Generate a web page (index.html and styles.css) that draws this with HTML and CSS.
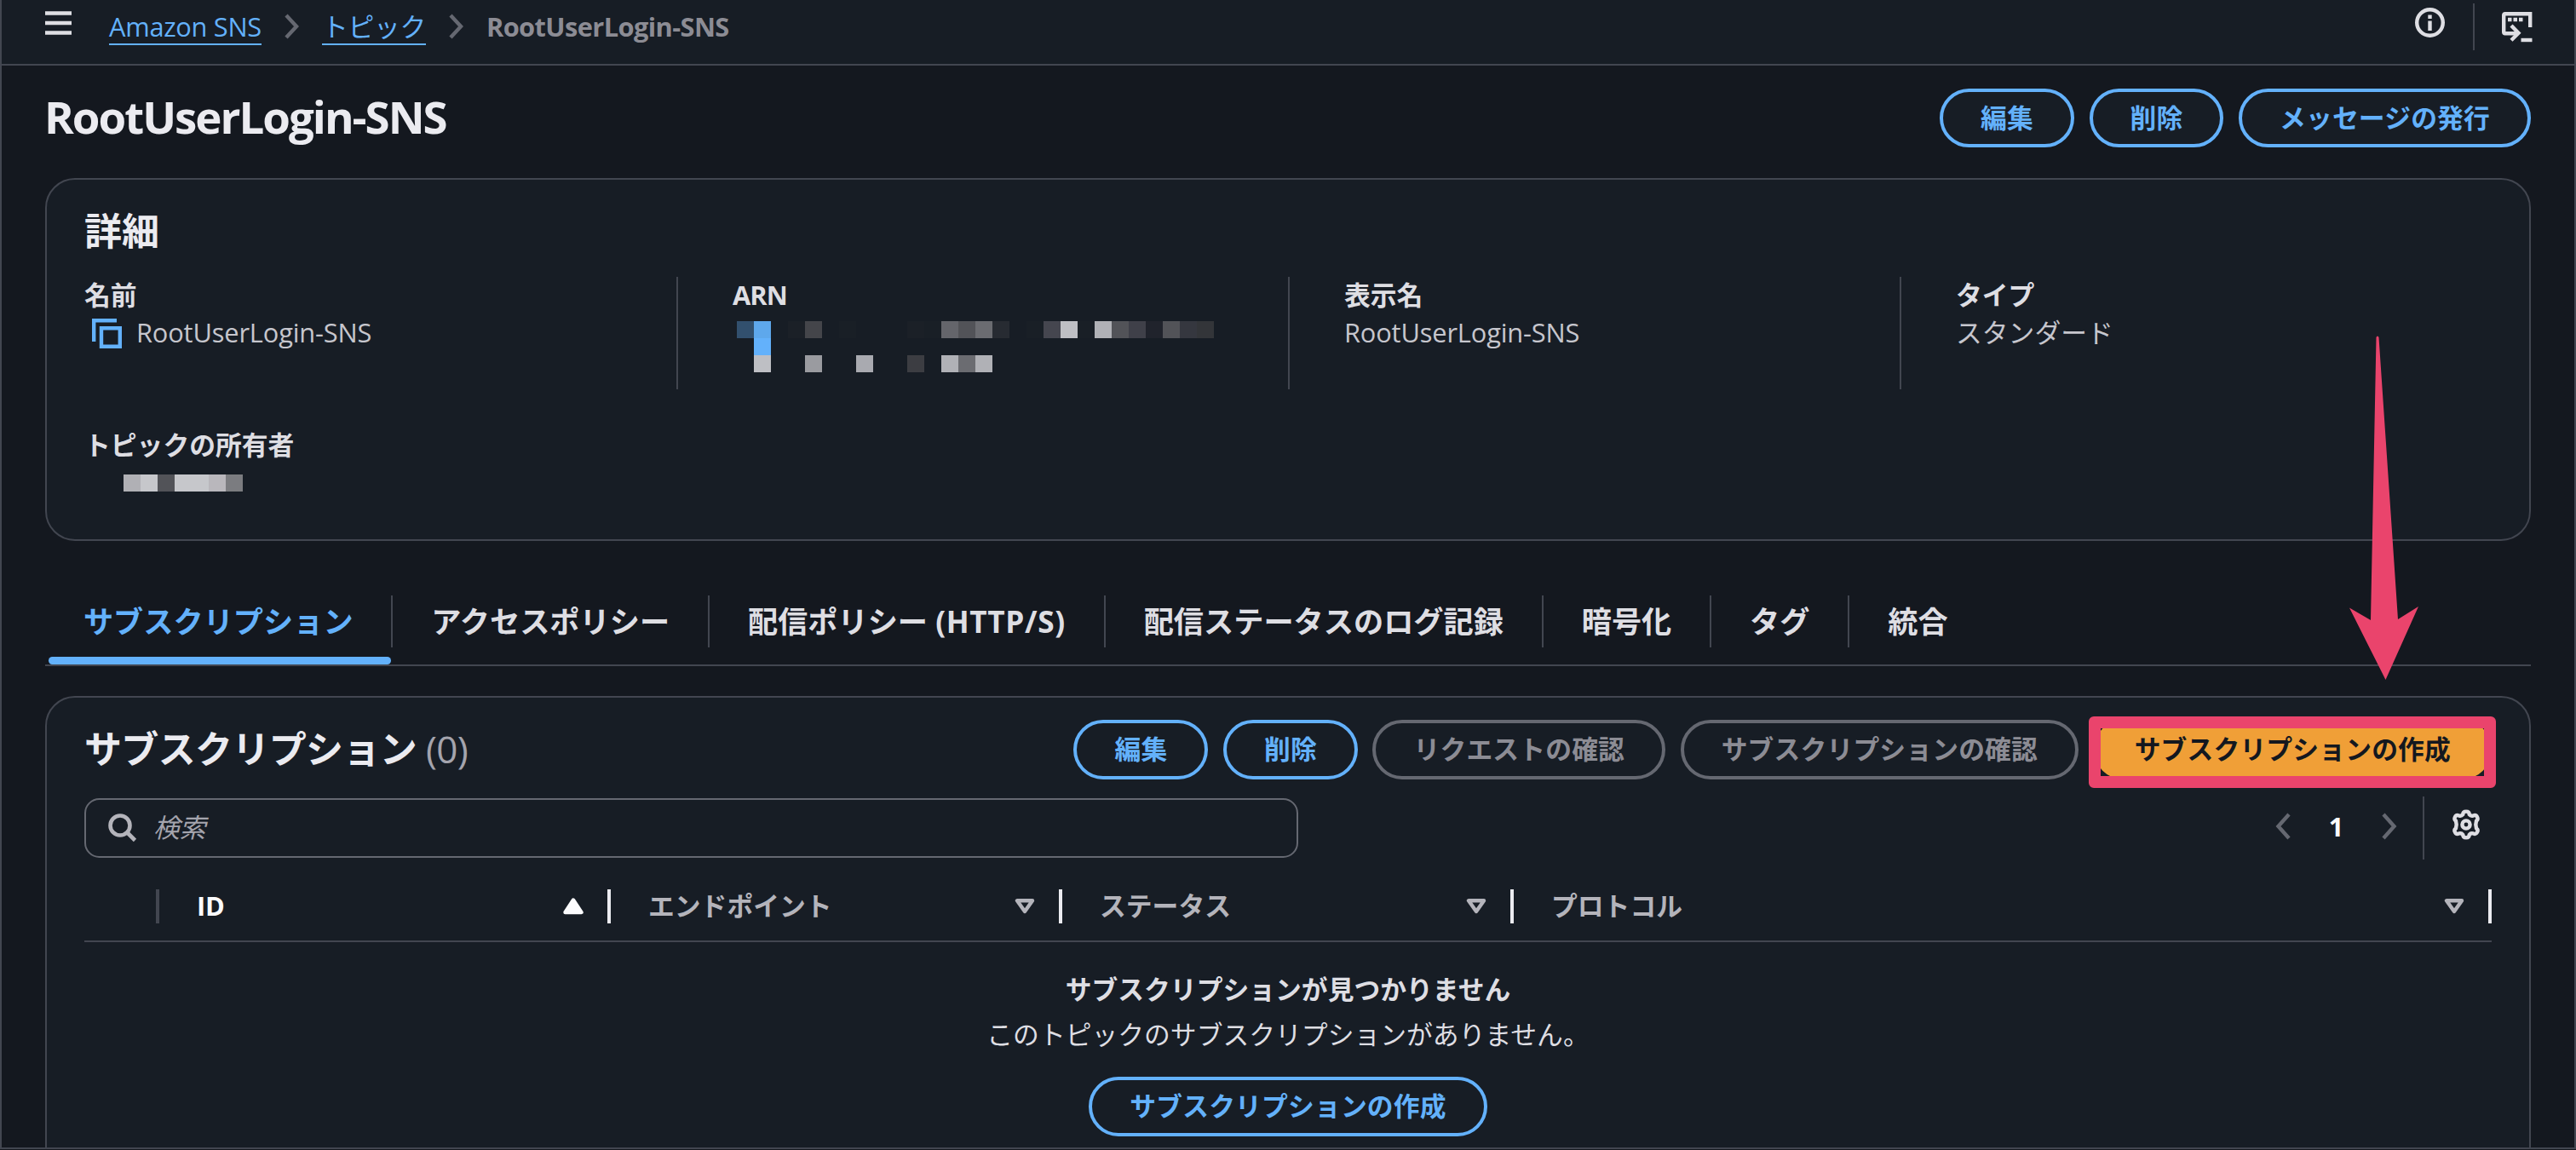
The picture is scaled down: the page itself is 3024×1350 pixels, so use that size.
FILE: index.html
```html
<!DOCTYPE html>
<html lang="ja">
<head>
    <meta charset="UTF-8">
    <meta name="viewport" content="width=device-width, initial-scale=1.0">
    <title>RootUserLogin-SNS | Amazon SNS</title>
    <link rel="stylesheet" href="styles.css">
</head>
<body>
    <div class="console">
        <header class="topbar">
            <svg class="menu-icon" width="31" height="28" viewBox="0 0 31 28">
                <path d="M0 2.5h31M0 14h31M0 25.5h31"/>
            </svg>
            <nav class="breadcrumb">
                <a class="crumb" href="#">Amazon SNS</a>
                <svg class="crumb-sep" width="18" height="30" viewBox="0 0 18 30"><path d="M2 2l12 13L2 28"/></svg>
                <a class="crumb" href="#">トピック</a>
                <svg class="crumb-sep" width="18" height="30" viewBox="0 0 18 30"><path d="M2 2l12 13L2 28"/></svg>
                <span class="crumb-current">RootUserLogin-SNS</span>
            </nav>
            <div class="topbar-tools">
                <svg class="info-icon" width="35" height="35" viewBox="0 0 35 35">
                    <circle cx="17.5" cy="17.5" r="15.3"/>
                    <path d="M17.5 8.5v4.5M17.5 15.5v11.5"/>
                </svg>
                <span class="tools-divider"></span>
                <svg class="shell-icon" width="36" height="36" viewBox="0 0 36 36">
                    <path d="M18 25.2H3.700q-1.500 0-1.500-1.500V3.700q0-1.500 1.500-1.500h29.500V18"/>
                    <path d="M11 16l8.5 8.8L11 33.2"/>
                    <path d="M22.500 33H35.500"/>
                    <path d="M7 9h4.500M13.500 9H18M20 9h4.500"/>
                </svg>
            </div>
        </header>

        <main class="content">
            <div class="title-row">
                <h1>RootUserLogin-SNS</h1>
                <div class="actions">
                    <button class="btn">編集</button>
                    <button class="btn">削除</button>
                    <button class="btn">メッセージの発行</button>
                </div>
            </div>

            <section class="card details">
                <h2>詳細</h2>
                <div class="detail-grid">
                    <div class="detail">
                        <div class="label">名前</div>
                        <div class="value copy-value">
                            <svg class="copy-icon" width="35" height="35" viewBox="0 0 35 35">
                                <path d="M2.200 27V2.200H29"/>
                                <path d="M11 11.200h21.800v21.600H11z"/>
                            </svg>
                            <span class="latin">RootUserLogin-SNS</span>
                        </div>
                    </div>
                    <div class="detail">
                        <div class="label latin">ARN</div>
                        <!-- masked value -->
                        <svg class="mask-arn" width="560" height="60" viewBox="0 0 28 3" shape-rendering="crispEdges">
                            <path fill="#32506e" d="M0 0h1v1H0z"/>
                            <path fill="#5ea8ec" d="M1 0h1v1H1z"/>
                            <path fill="#63b1fb" d="M1 1h1v1H1z"/>
                            <path fill="#1b2027" d="M3 0h1v1H3zM10 0h1v1h-1z"/>
                            <path fill="#44454a" d="M4 0h1v1H4z"/>
                            <path fill="#191f26" d="M6 0h1v1H6zM11 0h1v1h-1zM17 0h1v1h-1zM20 0h1v1h-1z"/>
                            <path fill="#64656b" d="M12 0h1v1h-1z"/>
                            <path fill="#525358" d="M13 0h1v1h-1zM22 0h1v1h-1zM25 0h1v1h-1z"/>
                            <path fill="#6b6c71" d="M14 0h1v1h-1zM13 2h1v1h-1z"/>
                            <path fill="#272b32" d="M15 0h1v1h-1z"/>
                            <path fill="#45464f" d="M18 0h1v1h-1z"/>
                            <path fill="#bebfc4" d="M19 0h1v1h-1zM1 2h1v1H1z"/>
                            <path fill="#b0b1b6" d="M21 0h1v1h-1zM12 2h1v1h-1zM14 2h1v1h-1z"/>
                            <path fill="#3f4049" d="M23 0h1v1h-1z"/>
                            <path fill="#20232c" d="M24 0h1v1h-1z"/>
                            <path fill="#35373f" d="M26 0h1v1h-1z"/>
                            <path fill="#333539" d="M27 0h1v1h-1z"/>
                            <path fill="#9a9ba0" d="M4 2h1v1H4z"/>
                            <path fill="#a9aab0" d="M7 2h1v1H7z"/>
                            <path fill="#3c3d42" d="M10 2h1v1h-1z"/>
                        </svg>
                    </div>
                    <div class="detail">
                        <div class="label">表示名</div>
                        <div class="value"><span class="latin">RootUserLogin-SNS</span></div>
                    </div>
                    <div class="detail">
                        <div class="label">タイプ</div>
                        <div class="value">スタンダード</div>
                    </div>
                    <div class="detail">
                        <div class="label">トピックの所有者</div>
                        <svg class="mask-owner" width="140" height="20" viewBox="0 0 7 1" shape-rendering="crispEdges">
                            <path fill="#c6c7cb" d="M1 0h4v1H1z"/>
                            <path fill="#b0b0b5" d="M0 0h1v1H0z"/>
                            <path fill="#525358" d="M2 0h1v1H2z"/>
                            <path fill="#b9b7bc" d="M5 0h1v1H5z"/>
                            <path fill="#7b7c80" d="M6 0h1v1H6z"/>
                        </svg>
                    </div>
                </div>
            </section>

            <nav class="tabs">
                <a class="tab active" href="#">サブスクリプション</a>
                <a class="tab" href="#">アクセスポリシー</a>
                <a class="tab" href="#">配信ポリシー <span class="protocol">(HTTP/S)</span></a>
                <a class="tab" href="#">配信ステータスのログ記録</a>
                <a class="tab" href="#">暗号化</a>
                <a class="tab" href="#">タグ</a>
                <a class="tab" href="#">統合</a>
            </nav>

            <section class="card subscriptions">
                <div class="subs-header">
                    <h2>サブスクリプション <span class="count">(0)</span></h2>
                    <div class="actions">
                        <button class="btn">編集</button>
                        <button class="btn">削除</button>
                        <button class="btn" disabled>リクエストの確認</button>
                        <button class="btn" disabled>サブスクリプションの確認</button>
                        <div class="highlighted">
                            <button class="btn btn-primary">サブスクリプションの作成</button>
                            <span class="highlight-box"></span>
                            <svg class="arrow" width="82" height="405" viewBox="0 0 82 405">
                                <path d="M31.500 2q1.500-3 3 0L57 333l24-15-38.500 86L0 319.500 25 334z"/>
                            </svg>
                        </div>
                    </div>
                </div>

                <div class="toolbar">
                    <div class="search">
                        <svg class="search-icon" width="34" height="34" viewBox="0 0 34 34">
                            <circle cx="14" cy="14" r="11.500"/>
                            <path d="M22 22l9.500 9.500"/>
                        </svg>
                        <span class="placeholder">検索</span>
                    </div>
                    <div class="pagination">
                        <svg class="page-arrow" width="18" height="32" viewBox="0 0 18 32"><path d="M16 2L3.500 16 16 30"/></svg>
                        <span class="page">1</span>
                        <svg class="page-arrow" width="18" height="32" viewBox="0 0 18 32"><path d="M2 2l12.500 14L2 30"/></svg>
                        <span class="page-divider"></span>
                        <svg class="gear-icon" width="36" height="36" viewBox="0 0 36 36">
                            <path d="M14.200 6.200Q14.200 2.600 18 2.600T21.800 6.200Q23.500 8.400 26.200 7.600 29.400 6 31 9T30 13.700Q28.600 18 30 22.300 32.600 24 31 27T26.200 28.400Q23.500 27.600 21.800 29.800 21.800 33.400 18 33.400T14.200 29.800Q12.500 27.600 9.800 28.400 6.600 30 5 27T6 22.300Q7.400 18 6 13.700 3.400 12 5 9T9.800 7.600Q12.500 8.400 14.200 6.200z"/>
                            <circle cx="18" cy="18" r="4.600"/>
                        </svg>
                    </div>
                </div>

                <div class="table-head">
                    <div class="th th-select"></div>
                    <div class="th sorted">
                        <span class="latin">ID</span>
                        <svg width="24" height="20" viewBox="0 0 24 20"><path class="filled" d="M12 2.500L21.500 17h-19z"/></svg>
                    </div>
                    <div class="th">
                        <span>エンドポイント</span>
                        <svg width="24" height="20" viewBox="0 0 24 20"><path d="M3 3.200h18L12 16z"/></svg>
                    </div>
                    <div class="th">
                        <span>ステータス</span>
                        <svg width="24" height="20" viewBox="0 0 24 20"><path d="M3 3.200h18L12 16z"/></svg>
                    </div>
                    <div class="th">
                        <span>プロトコル</span>
                        <svg width="24" height="20" viewBox="0 0 24 20"><path d="M3 3.200h18L12 16z"/></svg>
                    </div>
                </div>

                <div class="empty">
                    <div class="empty-title">サブスクリプションが見つかりません</div>
                    <div class="empty-text">このトピックのサブスクリプションがありません。</div>
                    <button class="btn">サブスクリプションの作成</button>
                </div>
            </section>
        </main>
    </div>
</body>
</html>
```
FILE: styles.css
```css
* {
    box-sizing: border-box;
}
body {
    margin: 0;
    background: #14181f;
    font-family: "Open Sans", "Noto Sans CJK JP", sans-serif;
    font-size: 30.8px;
    line-height: 44px;
    color: #dedee3;
}
h1, h2 {
    margin: 0;
    color: #ebebf0;
    font-weight: 700;
}
svg {
    display: block;
    flex: none;
    fill: none;
}
.console {
    display: flex;
    flex-direction: column;
    height: 1349px;
    overflow: hidden;
    border: 2px solid #424650;
    border-top: none;
}

/* top bar */
.topbar {
    display: flex;
    align-items: flex-start;
    flex: none;
    height: 77px;
    padding: 0 49px 0 51px;
    background: #171d25;
    border-bottom: 2px solid #424650;
}
.menu-icon {
    margin-top: 13px;
    stroke: #dedee3;
    stroke-width: 4.4;
}
.breadcrumb {
    display: flex;
    margin: 9px 0 0 44px;
}
.crumb {
    height: 44px;
    color: #63b1fb;
    text-decoration: none;
    border-bottom: 2px solid #63b1fb;
    letter-spacing: -0.3px;
}
.crumb-sep {
    margin: 7px 26px 0 27px;
    stroke: #656871;
    stroke-width: 4.4;
}
.crumb-current {
    color: #8c8c94;
    font-weight: 700;
    letter-spacing: -0.6px;
}
.topbar-tools {
    display: flex;
    margin-left: auto;
}
.info-icon {
    margin-top: 9px;
    stroke: #dedee3;
    stroke-width: 4.4;
}
.tools-divider {
    width: 2px;
    height: 55px;
    margin: 4px 32px 0 33px;
    background: #424650;
}
.shell-icon {
    margin-top: 14px;
    stroke: #dedee3;
    stroke-width: 4.4;
}

/* page */
.content {
    flex: 1;
    padding: 27px 51px 0;
}
.title-row {
    display: flex;
    justify-content: space-between;
    height: 69px;
}
h1 {
    font-size: 52.8px;
    line-height: 66px;
    margin-left: -1px;
    letter-spacing: -2px;
}
h2 {
    font-size: 44px;
    line-height: 52px;
}
.actions {
    display: flex;
    gap: 17.6px;
}
.btn {
    height: 70px;
    padding: 0 44px 2px;
    border: 4.4px solid #63b1fb;
    border-radius: 44px;
    background: #171d25;
    color: #63b1fb;
    font: inherit;
    font-weight: 700;
    line-height: 44px;
    letter-spacing: 0.15px;
    white-space: nowrap;
}
.title-row .btn {
    height: 69px;
}
.btn:disabled {
    border-color: #656871;
    color: #8c8c94;
}
.btn-primary {
    border-color: #f09f37;
    background: #f09f37;
    color: #14181f;
}
.card {
    background: #171d25;
    border: 2px solid #424650;
    border-radius: 35px;
    padding: 0 44px;
}

/* details */
.details {
    height: 426px;
    margin-top: 36px;
    padding-top: 34px;
}
.detail-grid {
    display: grid;
    grid-template-columns: 695px 718px 718px 1fr;
    row-gap: 44px;
    margin-top: 28px;
}
.detail {
    height: 132px;
    padding-left: 64px;
    border-left: 2px solid #424650;
}
.detail:nth-child(4n + 1) {
    padding-left: 0;
    border-left: none;
}
.detail:nth-child(n + 5) {
    height: 80px;
}
.label {
    line-height: 43px;
    font-weight: 700;
}
.value {
    color: #c6c6cd;
}
.latin {
    letter-spacing: -0.15px;
}
.label.latin {
    letter-spacing: -0.9px;
}
.copy-value {
    display: flex;
}
.copy-icon {
    margin: 6px 17px 0 9px;
    stroke: #63b1fb;
    stroke-width: 4.4;
}
.mask-arn {
    margin: 9px 0 0 5px;
}
.mask-owner {
    margin: 13px 0 0 46px;
}

/* tabs */
.tabs {
    display: flex;
    height: 103px;
    margin-top: 44px;
    padding-top: 20px;
    border-bottom: 2px solid #424650;
}
.tab {
    position: relative;
    height: 61px;
    padding: 0 44.9px;
    border-right: 2px solid #424650;
    color: #dedee3;
    font-size: 35.2px;
    font-weight: 700;
    line-height: 60px;
    text-decoration: none;
    white-space: nowrap;
}
.tab:last-child {
    border-right: none;
}
.tab.active {
    color: #63b1fb;
}
.tab.active::after {
    content: "";
    position: absolute;
    left: 4px;
    right: 0;
    bottom: -20px;
    height: 9px;
    border-radius: 4.4px;
    background: #63b1fb;
}
.protocol {
    letter-spacing: 0.65px;
}

/* subscriptions */
.subscriptions {
    height: 600px;
    margin-top: 35px;
    padding-top: 26px;
}
.subs-header {
    display: flex;
    justify-content: space-between;
    height: 70px;
}
.subs-header h2 {
    line-height: 68px;
    letter-spacing: -0.65px;
}
.count {
    color: #a4a4ad;
    font-weight: 400;
}
.highlighted {
    position: relative;
}
.highlight-box {
    position: absolute;
    top: -4px;
    left: -6px;
    right: -5px;
    height: 84px;
    border: 14px solid #ea446c;
    border-radius: 6px;
}
.arrow {
    position: absolute;
    top: -451px;
    right: 85px;
    fill: #ea446c;
}
.toolbar {
    display: flex;
    justify-content: space-between;
    height: 70px;
    margin-top: 22px;
}
.search {
    display: flex;
    align-items: center;
    width: 1425px;
    padding: 0 24px;
    border: 2px solid #656871;
    border-radius: 17.6px;
}
.search-icon {
    margin-left: 2px;
    stroke: #b4b4bb;
    stroke-width: 4.6;
}
.placeholder {
    margin: -3px 0 0 19px;
    color: #a4a4ad;
    font-style: italic;
}
.pagination {
    display: flex;
    align-items: center;
    height: 65px;
}
.page-arrow {
    stroke: #656871;
    stroke-width: 4.4;
}
.page {
    width: 107px;
    color: #fbfbfd;
    font-weight: 700;
    text-align: center;
}
.page-divider {
    width: 2px;
    height: 74px;
    margin: 4px 31px 0 30px;
    background: #424650;
}
.gear-icon {
    margin: -4px 12px 0 0;
    stroke: #dedee3;
    stroke-width: 4.4;
}
.table-head {
    display: grid;
    grid-template-columns: 88px 530px 530px 530px 1fr;
    align-items: center;
    height: 82px;
    margin-top: 17px;
    border-bottom: 2px solid #424650;
}
.th {
    display: flex;
    align-items: center;
    justify-content: space-between;
    height: 40px;
    padding: 0 28px 2px 44px;
    border-right: 4px solid #ebebf0;
    color: #b4b4bb;
    font-weight: 700;
}
.th svg {
    margin-top: 2px;
    stroke: #b4b4bb;
    stroke-width: 4.4;
    stroke-linejoin: round;
}
.th.sorted {
    color: #fbfbfd;
}
.th .filled {
    fill: #fbfbfd;
    stroke: #fbfbfd;
}
.th-select {
    border-right-color: #424650;
}
.empty {
    padding-top: 33px;
    text-align: center;
}
.empty-title {
    font-weight: 700;
}
.empty-text {
    margin: 9px 0 28px;
}
```
